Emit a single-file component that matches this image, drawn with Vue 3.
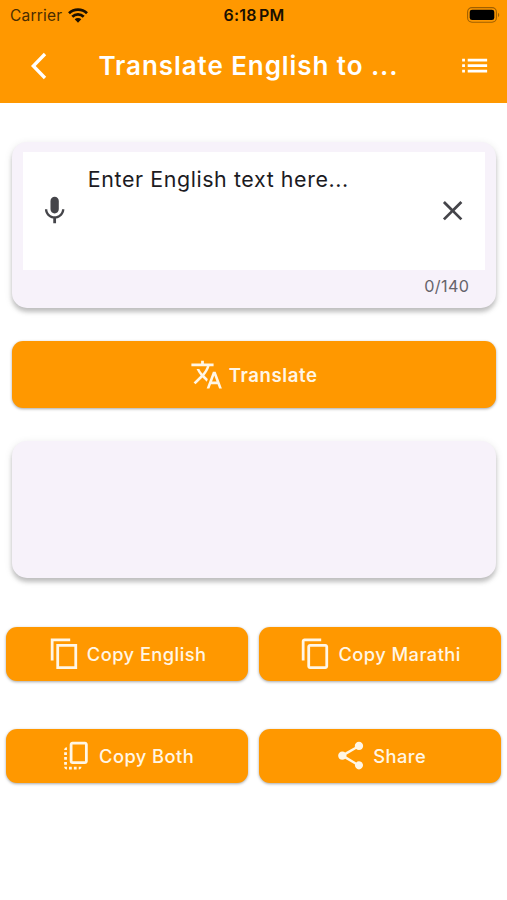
<script setup>
const copySharp = 'M16 1H2v16h2V3h12V1zm5 4H6v18h15V5zm-2 16H8V7h11v14z'
const copyRound = 'M16 1H4c-1.1 0-2 .9-2 2v14h2V3h12V1zm3 4H8c-1.1 0-2 .9-2 2v14c0 1.1.9 2 2 2h11c1.1 0 2-.9 2-2V7c0-1.1-.9-2-2-2zm0 16H8V7h11v14z'
const copyAll = 'M18 2H9c-1.1 0-2 .9-2 2v12c0 1.1.9 2 2 2h9c1.1 0 2-.9 2-2V4c0-1.1-.9-2-2-2zm0 14H9V4h9v12zM3 15v-2h2v2H3zm0-5.5h2v2H3v-2zM10 20h2v2h-2v-2zm-7-1.5v-2h2v2H3zM5 22c-1.1 0-2-.9-2-2h2v2zm3.5 0h-2v-2h2v2zm5 0v-2h2c0 1.1-.9 2-2 2zM5 6v2H3c0-1.1.9-2 2-2z'
const share = 'M18 16.08c-.76 0-1.44.3-1.96.77L8.91 12.7c.05-.23.09-.46.09-.7s-.04-.47-.09-.7l7.05-4.11c.54.5 1.25.81 2.04.81 1.66 0 3-1.34 3-3s-1.34-3-3-3-3 1.34-3 3c0 .24.04.47.09.7L8.04 9.81C7.5 9.31 6.79 9 6 9c-1.66 0-3 1.34-3 3s1.34 3 3 3c.79 0 1.5-.31 2.04-.81l7.12 4.16c-.05.21-.08.43-.08.65 0 1.61 1.31 2.92 2.92 2.92s2.92-1.31 2.92-2.92-1.31-2.92-2.92-2.92z'
const actions = [
  { key: 'english', label: 'Copy English', icon: copySharp },
  { key: 'marathi', label: 'Copy Marathi', icon: copyRound },
  { key: 'both', label: 'Copy Both', icon: copyAll },
  { key: 'share', label: 'Share', icon: share },
]
</script>

<template>
  <div class="screen">
    <header class="top">
      <div class="status">
        <div class="carrier">
          <span class="carrier-name">Carrier</span>
          <svg class="wifi" viewBox="0 0 20 15">
            <g fill="none" stroke="#1a1000" stroke-width="2.7">
              <path d="M1 5.3a12.8 12.8 0 0 1 18 0" />
              <path d="M4.3 8.8a8.1 8.1 0 0 1 11.4 0" />
            </g>
            <path d="M10 14.7l3.3-3.4a4.7 4.7 0 0 0-6.6 0z" fill="#1a1000" />
          </svg>
        </div>
        <span class="time">6:18 PM</span>
        <svg class="battery" viewBox="0 0 33 16">
          <rect x=".6" y=".6" width="28.8" height="14.6" rx="4.4" fill="none" stroke="#a06000" stroke-width="1.1" />
          <rect x="2.7" y="2.7" width="24.6" height="10.4" rx="2.4" />
          <path d="M31 5.7c1.7.7 1.7 3.7 0 4.4z" fill="#a06000" />
        </svg>
      </div>
      <div class="bar">
        <svg class="back" viewBox="0 0 16 28"><path d="M14 2L2.3 14 14 26" /></svg>
        <h1 class="title">Translate English to ...</h1>
        <svg class="icon" viewBox="0 0 24 24"><path d="M3 13h2v-2H3v2zm0 4h2v-2H3v2zm0-8h2V7H3v2zm4 4h14v-2H7v2zm0 4h14v-2H7v2zM7 7v2h14V7H7z" /></svg>
      </div>
    </header>

    <main class="content">
      <section class="card entry">
        <div class="field">
          <svg class="icon" viewBox="0 0 24 24"><path d="M12 14c1.66 0 2.99-1.34 2.99-3L15 5c0-1.66-1.34-3-3-3S9 3.34 9 5v6c0 1.66 1.34 3 3 3zm5.3-3c0 3-2.54 5.1-5.3 5.1S6.7 14 6.7 11H5c0 3.41 2.72 6.23 6 6.72V21h2v-3.28c3.28-.48 6-3.3 6-6.72h-1.7z" /></svg>
          <span class="hint">Enter English text here...</span>
          <svg class="icon" viewBox="0 0 24 24"><path d="M19 6.41L17.59 5 12 10.59 6.41 5 5 6.41 10.59 12 5 17.59 6.41 19 12 13.41 17.59 19 19 17.59 13.41 12z" /></svg>
        </div>
        <div class="count">0/140</div>
      </section>

      <button class="btn translate">
        <svg class="icon" viewBox="0 0 24 24"><path d="M12.87 15.07l-2.54-2.51.03-.03c1.74-1.94 2.98-4.17 3.71-6.53H17V4h-7V2H8v2H1v1.99h11.17C11.5 7.92 10.44 9.75 9 11.35 8.07 10.32 7.3 9.19 6.69 8h-2c.73 1.63 1.73 3.17 2.98 4.56l-5.09 5.02L4 19l5-5 3.11 3.11.76-2.04zM18.5 10h-2L12 22h2l1.12-3h4.75L21 22h2l-4.5-12zm-2.62 7l1.62-4.33L19.12 17h-3.24z" /></svg>
        <span>Translate</span>
      </button>

      <section class="card result"></section>

      <div class="actions">
        <button v-for="a in actions" :key="a.key" class="btn" :class="a.key">
          <svg class="icon" viewBox="0 0 24 24"><path :d="a.icon" /></svg>
          <span>{{ a.label }}</span>
        </button>
      </div>
    </main>
  </div>
</template>

<style>
body {
  margin: 0;
  background: #fff;
}
</style>

<style scoped>
.screen {
  width: 507px;
  height: 900px;
  overflow: hidden;
  background: #fff;
  font-family: Inter, "Liberation Sans", sans-serif;
}
.top {
  height: 103px;
  background: #ff9800;
}
.status {
  display: grid;
  grid-template-columns: 1fr auto 1fr;
  align-items: center;
  height: 30px;
  padding: 0 7px 0 10px;
  color: #1a1000;
}
.carrier {
  display: flex;
  align-items: center;
  gap: 6px;
}
.carrier-name {
  font-size: 15.5px;
  letter-spacing: 0.2px;
  color: #4a2c00;
}
.wifi {
  width: 20px;
  height: 15px;
}
.time {
  margin-right: 2px;
  font-size: 16px;
  font-weight: 600;
  letter-spacing: 0.2px;
  word-spacing: -2px;
}
.battery {
  justify-self: end;
  width: 33px;
  height: 16px;
}
.bar {
  display: grid;
  grid-template-columns: 16px 1fr 34px;
  align-items: center;
  height: 72px;
  padding: 0 15px 0 30.5px;
}
.back {
  width: 16px;
  height: 28px;
  fill: none;
  stroke: #fff;
  stroke-width: 3.3;
}
.title {
  margin: 0;
  padding-left: 52px;
  font-size: 26px;
  line-height: 32px;
  font-weight: 600;
  letter-spacing: 0.92px;
  color: #fff;
  white-space: nowrap;
}
.icon {
  display: block;
  flex: none;
  width: 33.3px;
  height: 33.3px;
  fill: currentColor;
}
.bar .icon {
  color: #fff;
}
.content {
  padding: 39px 6px 0;
}
.card {
  margin: 0 5.5px;
  border-radius: 15px;
  background: #f7f2fa;
  box-shadow: 0 4px 4px rgba(0, 0, 0, 0.2), 0 2px 8px rgba(0, 0, 0, 0.1);
}
.entry {
  height: 166px;
  padding: 10px 11px 0;
  box-sizing: border-box;
}
.field {
  display: grid;
  grid-template-columns: 33.3px 1fr 33.3px;
  align-items: center;
  height: 118px;
  padding: 0 15px;
  box-sizing: border-box;
  background: #fff;
  color: #45454a;
}
.hint {
  align-self: start;
  padding: 14px 0 0 17px;
  font-size: 21.4px;
  line-height: 27px;
  letter-spacing: 0.6px;
  color: #1c1b1f;
  white-space: nowrap;
}
.count {
  padding: 6px 15px 0 0;
  font-size: 16.2px;
  line-height: 21px;
  letter-spacing: 0.4px;
  text-align: right;
  color: #66646a;
}
.btn {
  display: flex;
  align-items: center;
  justify-content: center;
  gap: 6px;
  height: 54px;
  padding: 0;
  border: 0;
  border-radius: 11px;
  background: #ff9800;
  box-shadow: 0 1px 3px rgba(0, 0, 0, 0.35);
  color: #fff6e6;
  font-family: inherit;
  font-size: 18.3px;
  font-weight: 500;
  letter-spacing: 0.45px;
  white-space: nowrap;
}
.translate {
  gap: 5px;
  width: 484px;
  height: 67px;
  margin: 33px 6px 0;
  font-size: 18.6px;
  font-weight: 600;
  letter-spacing: 0.6px;
}
.result {
  height: 137px;
  margin-top: 33px;
}
.actions {
  display: grid;
  grid-template-columns: 1fr 1fr;
  gap: 48px 11px;
  margin-top: 49px;
}
</style>
